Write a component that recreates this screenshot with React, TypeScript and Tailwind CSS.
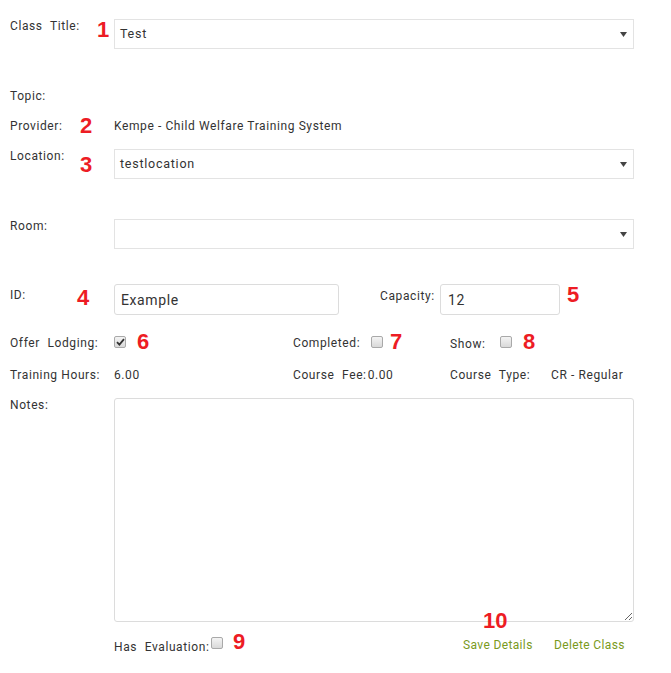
import React from 'react';

function Num({ n, x, y }: { n: string; x: number; y: number }) {
  return (
    <span
      className="absolute font-['Liberation_Sans',Arial,sans-serif] font-bold text-[22px] leading-none text-[#ed1c24] tracking-normal"
      style={{ left: x, top: y - 3 }}
    >
      {n}
    </span>
  );
}

function FakeSelect({ value }: { value?: string }) {
  return (
    <div className="flex-1 h-[30px] border border-[#e3e3e3] bg-white flex items-center justify-between pl-[5px] pr-[6px] text-[12.5px] tracking-[0.06em] text-[#333]">
      <span>{value}</span>
      <svg width="7" height="5" viewBox="0 0 7 5">
        <path d="M0 0 L7 0 L3.5 5 Z" fill="#444" />
      </svg>
    </div>
  );
}

function Check({ checked }: { checked?: boolean }) {
  return (
    <div className="w-[12px] h-[12px] rounded-[2px] border border-[#a9a9a9] bg-gradient-to-b from-[#f4f4f4] to-[#d9d9d9] flex items-center justify-center">
      {checked && (
        <svg width="9" height="8" viewBox="0 0 9 8">
          <path d="M1 4.2 L3.4 6.6 L8 1.2" stroke="#333" strokeWidth="1.8" fill="none" />
        </svg>
      )}
    </div>
  );
}

export default function App() {
  return (
    <div className="relative w-[671px] h-[673px] bg-white font-['Roboto',sans-serif] text-[12px] leading-[14px] text-[#333] tracking-[0.05em]">
      <div className="pl-[10px] pr-[37px] pt-[19px] flex flex-col">
        <div className="flex items-start">
          <div className="w-[104px] [word-spacing:4px]">Class Title:</div>
          <FakeSelect value="Test" />
        </div>

        <div className="mt-[40px]">Topic:</div>

        <div className="mt-[16px] flex">
          <div className="w-[104px]">Provider:</div>
          <div>Kempe - Child Welfare Training System</div>
        </div>

        <div className="mt-[16px] flex items-start">
          <div className="w-[104px]">Location:</div>
          <FakeSelect value="testlocation" />
        </div>

        <div className="mt-[40px] flex items-start">
          <div className="w-[104px]">Room:</div>
          <FakeSelect />
        </div>

        <div className="mt-[35px] flex items-start">
          <div className="w-[104px] mt-[4px]">ID:</div>
          <div className="w-[225px] h-[31px] border border-[#dcdcdc] rounded-[3px] flex items-center pl-[6px] text-[14px] text-[#333]">
            Example
          </div>
          <div className="ml-[41px] w-[60px] mt-[5px]">Capacity:</div>
          <div className="w-[120px] h-[31px] border border-[#dcdcdc] rounded-[3px] flex items-center pl-[7px] text-[14px] text-[#333]">
            12
          </div>
        </div>

        <div className="mt-[19px] flex items-start">
          <div className="w-[283px] flex">
            <div className="w-[104px] mt-[2px] [word-spacing:4px]">Offer Lodging:</div>
            <div className="mt-[2px]"><Check checked /></div>
          </div>
          <div className="w-[157px] flex">
            <div className="w-[78px] mt-[2px]">Completed:</div>
            <div className="mt-[2px]"><Check /></div>
          </div>
          <div className="flex">
            <div className="w-[50px] mt-[3px]">Show:</div>
            <div className="mt-[2px]"><Check /></div>
          </div>
        </div>

        <div className="mt-[17px] flex items-start">
          <div className="w-[283px] flex">
            <div className="w-[104px]">Training Hours:</div>
            <div>6.00</div>
          </div>
          <div className="w-[157px] flex">
            <span className="[word-spacing:4px]">Course Fee:</span>
            <span className="ml-[1px]">0.00</span>
          </div>
          <div className="flex">
            <div className="w-[101px] [word-spacing:4px]">Course Type:</div>
            <div>CR - Regular</div>
          </div>
        </div>

        <div className="mt-[16px] flex items-start">
          <div className="w-[104px]">Notes:</div>
          <textarea className="flex-1 h-[224px] border border-[#dcdcdc] rounded-[3px] outline-none resize" />
        </div>

        <div className="mt-[17px] flex items-start pl-[104px]">
          <div className="flex w-[349px]">
            <div className="mt-[1px] [word-spacing:4px]">Has Evaluation:</div>
            <div className="ml-[2px] mt-[-2px]"><Check /></div>
          </div>
          <div className="w-[91px] text-[#7a9a1c] mt-[-1px] tracking-[0.03em]">Save Details</div>
          <div className="text-[#7a9a1c] mt-[-1px] tracking-[0.03em]">Delete Class</div>
        </div>
      </div>

      <Num n="1" x={97} y={22} />
      <Num n="2" x={80} y={118} />
      <Num n="3" x={80} y={157} />
      <Num n="4" x={77} y={290} />
      <Num n="5" x={567} y={287} />
      <Num n="6" x={137} y={334} />
      <Num n="7" x={390} y={334} />
      <Num n="8" x={523} y={334} />
      <Num n="9" x={233} y={634} />
      <Num n="10" x={483} y={613} />
    </div>
  );
}
